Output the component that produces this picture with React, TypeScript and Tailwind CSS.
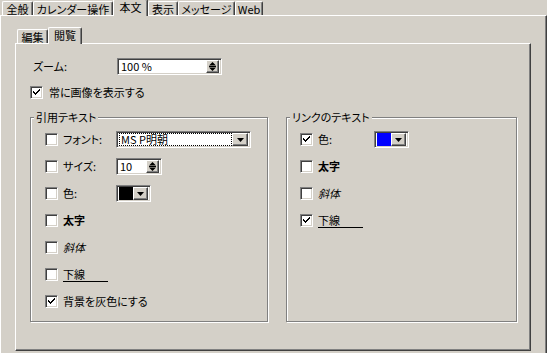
import React from "react";

const raised =
  "border border-t-white border-l-white border-r-[#404040] border-b-[#404040] shadow-[inset_-1px_-1px_0_#808080]";
const sunken =
  "border border-t-[#808080] border-l-[#808080] border-r-white border-b-white shadow-[inset_1px_1px_0_#404040,inset_-1px_-1px_0_#d4d0c8]";

const Check: React.FC<{ checked?: boolean }> = ({ checked }) => (
  <div className={`w-[13px] h-[13px] shrink-0 bg-white ${sunken} flex items-center justify-center`}>
    {checked && (
      <svg width="7" height="7" viewBox="0 0 7 7">
        <path d="M0 2h1v1h1v1h1V3h1V2h1V1h1V0h1v2H6v1H5v1H4v1H3v1H2V5H1V4H0z" fill="#000" />
      </svg>
    )}
  </div>
);

const DropButton: React.FC = () => (
  <div className={`w-[16px] h-[13px] bg-[#d4d0c8] ${raised} flex items-center justify-center`}>
    <svg width="7" height="4" viewBox="0 0 7 4">
      <path d="M0 0h7L3.5 4z" fill="#000" />
    </svg>
  </div>
);

const SpinButton: React.FC = () => (
  <div className={`w-[13px] h-[13px] bg-[#d4d0c8] ${raised} flex items-center justify-center`}>
    <svg width="7" height="9" viewBox="0 0 7 9">
      <path d="M3.5 0L7 3.5H0z M0 5.5h7L3.5 9z" fill="#000" />
      <rect x="0" y="4" width="7" height="1" fill="#000" />
    </svg>
  </div>
);

const Tab: React.FC<{ label: string; w: string; active?: boolean }> = ({ label, w, active }) => (
  <div
    className={`${w} ${
      active ? "h-[17px] -mb-px z-10 bg-[#d4d0c8]" : "h-[14px]"
    } relative border-t border-l border-white border-r border-r-[#404040] rounded-t-[2px] shadow-[inset_-1px_0_0_#808080] flex items-start justify-center pt-[1px] leading-[12px]`}
  >
    {label}
  </div>
);

const Row: React.FC<{
  checked?: boolean;
  label: React.ReactNode;
  labelW?: string;
  children?: React.ReactNode;
}> = ({ checked, label, labelW = "", children }) => (
  <div className="h-[17px] flex items-center">
    <Check checked={checked} />
    <div className={`ml-[5px] ${labelW}`}>{label}</div>
    {children}
  </div>
);

const Group: React.FC<{ title: string; w: string; children: React.ReactNode }> = ({
  title,
  w,
  children,
}) => (
  <div
    className={`relative ${w} h-[205px] border border-[#808080] shadow-[inset_1px_1px_0_#fff,1px_1px_0_#fff]`}
  >
    <div className="absolute -top-[8px] left-[3px] px-[2px] bg-[#d4d0c8] leading-[14px]">{title}</div>
    {children}
  </div>
);

const Underlined: React.FC = () => (
  <span className="inline-block w-[45px] border-b border-black leading-[13px]">下線</span>
);

export default function App() {
  return (
    <div className="w-[547px] h-[353px] bg-[#d4d0c8] overflow-hidden text-[11px] text-black font-['Noto_Sans_CJK_JP','Noto_Sans',sans-serif] [font-feature-settings:'palt']">
      <div className="h-[15px] flex items-end pl-[2px] relative z-10">
        <Tab label="全般" w="w-[31px]" />
        <Tab label="カレンダー操作" w="w-[80px]" />
        <Tab label="本文" w="w-[35px]" active />
        <Tab label="表示" w="w-[30px]" />
        <Tab label="メッセージ" w="w-[57px]" />
        <Tab label="Web" w="w-[28px]" />
      </div>
      <div className="h-[340px] w-[547px] border-t border-l border-white border-r border-r-[#404040] shadow-[inset_-1px_0_0_#808080] pl-[14px] pt-[10px]">
        <div className="h-[17px] flex items-end pl-[2px] relative z-10">
          <Tab label="編集" w="w-[31px]" />
          <Tab label="閲覧" w="w-[34px]" active />
        </div>
        <div className="w-[516px] h-[308px] border-t border-l border-white border-r border-b border-r-[#404040] border-b-[#404040] shadow-[inset_-1px_-1px_0_#808080] pt-[14px]">
          <div className="h-[17px] flex items-center pl-[17px]">
            <div className="w-[84px]">ズーム:</div>
            <div className={`w-[105px] h-[17px] bg-white ${sunken} flex items-center justify-between pl-[3px] pr-[2px]`}>
              <span>100 %</span>
              <SpinButton />
            </div>
          </div>
          <div className="mt-[11px] pl-[14px] h-[13px] flex items-center">
            <Check checked />
            <span className="ml-[6px]">常に画像を表示する</span>
          </div>
          <div className="mt-[18px] ml-[14px] flex gap-[18px]">
            <Group title="引用テキスト" w="w-[238px]">
              <div className="pt-[13px] pl-[14px] flex flex-col gap-[10px]">
                <Row label="フォント:" labelW="w-[53px]">
                  <div className={`w-[135px] h-[17px] bg-white ${sunken} flex items-center justify-between pl-[2px] pr-[2px]`}>
                    <div className="h-[13px] w-[116px] border border-dotted border-black flex items-center pl-[1px] leading-none">
                      MS P明朝
                    </div>
                    <DropButton />
                  </div>
                </Row>
                <Row label="サイズ:" labelW="w-[53px]">
                  <div className={`w-[46px] h-[17px] bg-white ${sunken} flex items-center justify-between pl-[3px] pr-[2px]`}>
                    <span>10</span>
                    <SpinButton />
                  </div>
                </Row>
                <Row label="色:" labelW="w-[53px]">
                  <div className={`w-[35px] h-[17px] bg-white ${sunken} flex items-center justify-between pl-[2px] pr-[2px]`}>
                    <div className="w-[14px] h-[13px] bg-black" />
                    <DropButton />
                  </div>
                </Row>
                <Row label={<span className="font-bold">太字</span>} />
                <Row label={<span className="italic">斜体</span>} />
                <Row label={<Underlined />} />
                <Row checked label="背景を灰色にする" />
              </div>
            </Group>
            <Group title="リンクのテキスト" w="w-[231px]">
              <div className="pt-[13px] pl-[13px] flex flex-col gap-[10px]">
                <Row checked label="色:" labelW="w-[56px]">
                  <div className={`w-[35px] h-[17px] bg-white ${sunken} flex items-center justify-between pl-[2px] pr-[2px]`}>
                    <div className="w-[14px] h-[13px] bg-[#0000ff]" />
                    <DropButton />
                  </div>
                </Row>
                <Row label={<span className="font-bold">太字</span>} />
                <Row label={<span className="italic">斜体</span>} />
                <Row checked label={<Underlined />} />
              </div>
            </Group>
          </div>
        </div>
      </div>
    </div>
  );
}
